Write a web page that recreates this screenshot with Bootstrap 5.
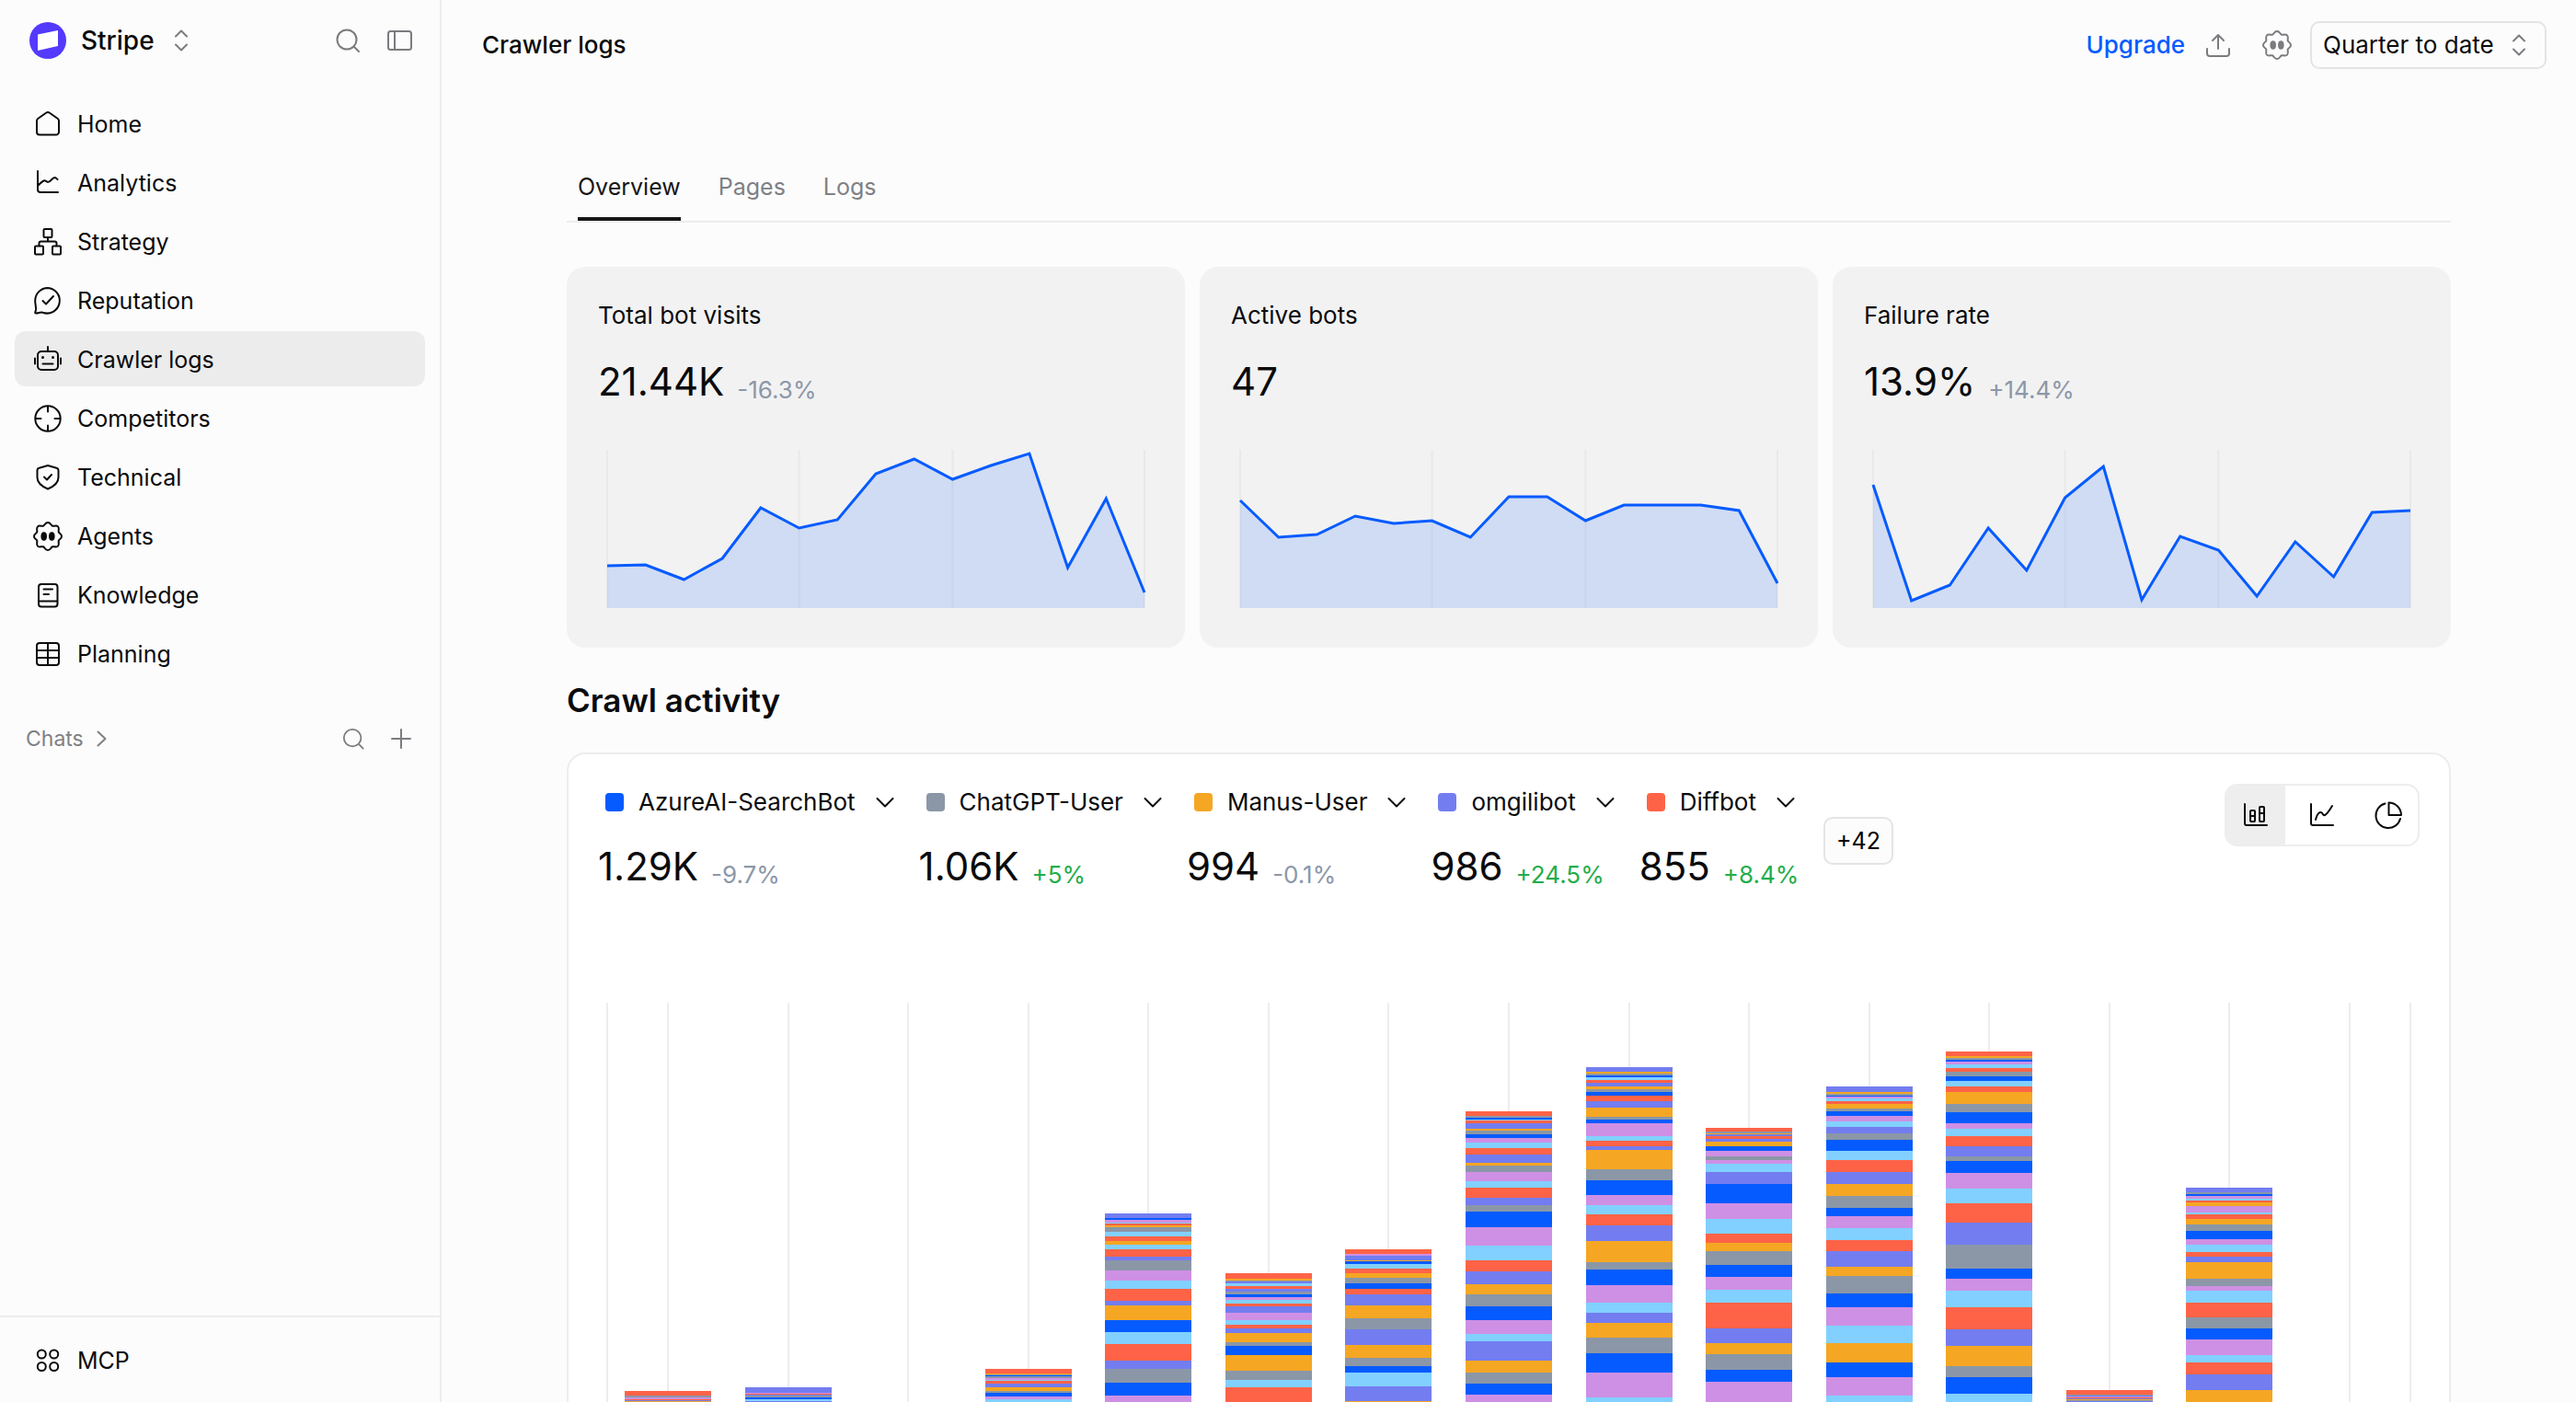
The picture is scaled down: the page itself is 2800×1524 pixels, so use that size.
<!DOCTYPE html>
<html lang="en">
<head>
<meta charset="utf-8">
<meta name="viewport" content="width=device-width, initial-scale=1">
<title>Crawler logs</title>
<link href="https://cdn.jsdelivr.net/npm/bootstrap@5.3.0/dist/css/bootstrap.min.css" rel="stylesheet">
<style>
  :root {
    --ink: #0b0b0c; --soft: #808084; --muted: #8c97a8; --line: #ededed;
    --blue: #055bff; --green: #1fad4b;
  }
  body { font-family: Inter, "Liberation Sans", sans-serif; font-size: 26px; line-height: 32px; color: var(--ink); background: #fcfcfc; }
  svg { display: block; flex: none; }
  .ico { width: 32px; height: 32px; fill: none; stroke: currentColor; stroke-width: 2; stroke-linecap: round; stroke-linejoin: round; }
  .bare { border: 0; background: none; padding: 0; color: inherit; }
  .gray { color: #7b7b80; }

  .side { width: 480px; border-right: 2px solid var(--line); }
  .side-head { padding: 24px 28px 0 32px; height: 88px; }
  .brand { font-size: 28px; font-weight: 500; gap: 16px; }
  .brand .ico { margin-left: -3px; }
  .side-nav { padding: 16px; gap: 4px; }
  .side-link { height: 60px; padding: 1px 20px 0; gap: 16px; border-radius: 12px; color: var(--ink); text-decoration: none; font-size: 25px; }
  .side-link.active { background: #ececec; }
  .side-link:hover { color: var(--ink); }
  .chats { padding: 31px 26px 0 28px; font-size: 23px; color: var(--soft); }
  .side-foot { border-top: 2px solid var(--line); padding: 16px; }

  .topbar { height: 96px; padding: 1px 32px 0 44px; }
  .topbar h1 { font-size: 26px; font-weight: 500; line-height: 32px; }
  .upgrade { color: var(--blue); font-weight: 500; text-decoration: none; }
  .period .form-select { height: 52px; border: 2px solid #e4e4e4; border-radius: 10px; padding: 0 55px 0 12px; font-size: 26px; font-weight: 400; line-height: 32px; color: var(--ink); background: #fcfcfc; }
  .period svg { position: absolute; right: 14px; top: 10px; pointer-events: none; }

  .page { padding: 0 136px; }
  .views { margin-top: 80px; padding: 0 12px; gap: 41px; border-bottom: 2px solid var(--line); font-size: 25px; }
  .views a { height: 64px; padding-top: 11px; color: var(--soft); text-decoration: none; border-bottom: 4px solid transparent; }
  .views a.active { color: #171717; border-color: #171717; }
  .stats { margin-top: 48px; gap: 16px; }
  .stat { flex: 1 1 0; min-width: 0; height: 414px; background: #f2f2f2; border-radius: 20px; padding: 37px 34px 0; }
  .stat svg { width: calc(100% - 20px); height: 172px; margin: 42px 10px 0; overflow: visible; }
  .figure-row { gap: 14px; line-height: 64px; }
  .stat .figure-row { margin-top: 24px; }
  .num { font-size: 42px; }
  .delta { line-height: 32px; color: var(--muted); margin-top: 25px; }
  .delta.up { color: var(--green); }
  .page h2 { font-size: 35px; line-height: 44px; font-weight: 600; margin: 35px 0 0; }

  .panel { margin-top: 35px; padding: 32px; background: #fff; border: 2px solid var(--line); border-radius: 20px; }
  .legend-row { gap: 21px; }
  .series { height: 124px; }
  .series .figure-row { margin-top: 18px; }
  .series-name { height: 40px; padding-left: 8px; gap: 16px; }
  .swatch { width: 20px; height: 20px; border-radius: 4px; }
  .more { height: 52px; border: 2px solid #e4e4e4; border-radius: 10px; background: #fcfcfc; padding: 0 12px; font-size: 25px; }
  .kinds { height: 68px; border: 2px solid var(--line); border-radius: 14px; overflow: hidden; }
  .kinds button { width: 64px; }
  .kinds button:nth-child(2) { width: 80px; }
  .kinds [aria-pressed=true] { background: #eee; }

  .plot { height: 434px; margin: 114px 9px 0; border-left: 2px solid var(--line); border-right: 2px solid var(--line); }
  .band { flex: 1 1 0; position: relative; }
  .band::before { content: ""; position: absolute; left: 50%; top: 0; bottom: 0; border-left: 2px solid var(--line); margin-left: -1px; }
  .pile { position: relative; width: 72%; }
</style>
<script src="https://cdn.jsdelivr.net/npm/bootstrap@5.3.0/dist/js/bootstrap.bundle.min.js"></script>
</head>
<body>
<svg width="0" height="0" class="position-absolute" aria-hidden="true">
  <defs>
    <symbol id="i-search" viewBox="0 0 32 32"><circle cx="15" cy="15" r="10.500"/><path d="M23 23l5 5"/></symbol>
    <symbol id="i-updown" viewBox="0 0 32 32"><path d="M10 11.500l6-6 6 6M10 20.500l6 6 6-6"/></symbol>
    <symbol id="i-down" viewBox="0 0 32 32"><path d="M7.500 12l8.500 8.500L24.500 12"/></symbol>
    <symbol id="i-agent" viewBox="0 0 32 32"><path d="M16 1c3.200 0 3 2.900 5 3.700s4-1.300 6 .7.100 4 .8 6S31 12.800 31 16s-2.500 2.600-3.200 4.600 1.200 4-.8 6-4-.1-6 .7-1.800 3.700-5 3.700-3-2.900-5-3.700-4 1.300-6-.7-.1-4-.8-6S1 19.200 1 16s2.500-2.600 3.200-4.600-1.200-4 .8-6 4 .1 6-.7S12.800 1 16 1z"/><g fill="currentColor" stroke="none"><ellipse cx="11.700" cy="16" rx="3.300" ry="4.800"/><ellipse cx="20.300" cy="16" rx="3.300" ry="4.800"/></g></symbol>
    <symbol id="i-axis" viewBox="0 0 32 32"><path d="M5 3v20a3 3 0 0 0 3 3h19M5 19c2-2 4.500-4.500 6.500-5.500 2.500-1 3.500 2.500 6 1s3.500-4 6-4.500c1.200 0 2 1 3 2"/></symbol>
  </defs>
</svg>

<div class="d-flex vh-100 overflow-hidden">
  <aside class="side d-flex flex-column flex-shrink-0">
    <div class="side-head d-flex align-items-start">
      <button class="brand bare d-flex align-items-center" type="button">
        <svg width="40" height="40" viewBox="0 0 40 40"><circle cx="20" cy="20" r="20" fill="#533afd"/><path d="M9 13.500L31 9v17L9 31z" fill="#fff"/></svg>
        Stripe
        <svg class="ico gray" aria-hidden="true"><use href="#i-updown"/></svg>
      </button>
      <div class="d-flex gray ms-auto mt-1">
        <button class="bare" type="button" aria-label="Search"><svg class="ico me-4"><use href="#i-search"/></svg></button>
        <button class="bare" type="button" aria-label="Toggle sidebar"><svg class="ico" viewBox="0 0 32 32"><rect x="4" y="6" width="25" height="20" rx="2.500"/><path d="M11 6v20"/></svg></button>
      </div>
    </div>
    <nav class="side-nav d-flex flex-column">
      <a class="side-link d-flex align-items-center" href="#"><svg class="ico" viewBox="0 0 32 32"><path d="M4 12.500c0-1.300.5-2.100 1.500-2.800l8.500-6a3.500 3.500 0 0 1 4 0l8.500 6c1 .7 1.500 1.500 1.500 2.800V24.500a3 3 0 0 1-3 3H7a3 3 0 0 1-3-3z"/></svg>Home</a>
      <a class="side-link d-flex align-items-center" href="#"><svg class="ico"><use href="#i-axis"/></svg>Analytics</a>
      <a class="side-link d-flex align-items-center" href="#"><svg class="ico" viewBox="0 0 32 32"><rect x="11.500" y="2" width="9" height="9" rx="1"/><rect x="2" y="20.500" width="9" height="9" rx="1"/><rect x="21" y="20.500" width="9" height="9" rx="1"/><path d="M16 11v4.500M6.500 20v-2.500a2 2 0 0 1 2-2h15a2 2 0 0 1 2 2V20"/></svg>Strategy</a>
      <a class="side-link d-flex align-items-center" href="#"><svg class="ico" viewBox="0 0 32 32"><path d="M16 2a13.800 13.800 0 1 1-5.500 26.800c-2.500-1-5 1-7.500.7-1.500-.3-.5-1.800 0-3.500.5-2-.8-6.500-.8-10A13.800 13.800 0 0 1 16 2z"/><path d="M10.500 16l3.500 3.500 8-8.500"/></svg>Reputation</a>
      <a class="side-link active d-flex align-items-center" href="#" aria-current="page"><svg class="ico" viewBox="0 0 32 32"><rect x="5" y="7" width="22" height="20" rx="4"/><path d="M16 2v5M2 14.500v6M30 14.500v6M10.500 20.500h11"/><g fill="currentColor" stroke="none"><circle cx="10.500" cy="13.500" r="1.500"/><circle cx="21.500" cy="13.500" r="1.500"/></g></svg>Crawler logs</a>
      <a class="side-link d-flex align-items-center" href="#"><svg class="ico" viewBox="0 0 32 32"><circle cx="16" cy="16" r="13.700"/><path d="M16 3v5.500M16 23.500V29M3 16h5.500M23.500 16H29"/></svg>Competitors</a>
      <a class="side-link d-flex align-items-center" href="#"><svg class="ico" viewBox="0 0 32 32"><path d="M16 3l9.500 2.800A2.500 2.500 0 0 1 27.500 8v8c0 6-5.500 10-11.500 12.500C10 26 4.500 22 4.500 16V8a2.500 2.500 0 0 1 2-2.200z"/><path d="M12 15.500l3 3 5-5.500"/></svg>Technical</a>
      <a class="side-link d-flex align-items-center" href="#"><svg class="ico"><use href="#i-agent"/></svg>Agents</a>
      <a class="side-link d-flex align-items-center" href="#"><svg class="ico" viewBox="0 0 32 32"><rect x="6" y="4" width="20.500" height="24.500" rx="3"/><path d="M6 22.500h20M11.500 9.500h9.500M11.500 15h5.500"/></svg>Knowledge</a>
      <a class="side-link d-flex align-items-center" href="#"><svg class="ico" viewBox="0 0 32 32"><rect x="4" y="4" width="24" height="24" rx="3"/><path d="M16 4v24M4 12h24M4 20h24"/></svg>Planning</a>
    </nav>
    <div class="chats d-flex align-items-center">
      <button class="bare d-flex align-items-center gap-1" type="button">Chats <svg class="ico"><path d="M11.500 8.500l8 7.500-8 7.500"/></svg></button>
      <div class="d-flex gap-3 gray ms-auto">
        <button class="bare me-1" type="button" aria-label="Search chats"><svg class="ico" viewBox="-2 -2 36 36"><use href="#i-search" width="32" height="32"/></svg></button>
        <button class="bare" type="button" aria-label="New chat"><svg class="ico"><path d="M16 6v20M6 16h20"/></svg></button>
      </div>
    </div>
    <div class="side-foot mt-auto">
      <a class="side-link d-flex align-items-center" href="#"><svg class="ico" viewBox="0 0 32 32"><circle cx="9.300" cy="9" r="4.500"/><circle cx="22.700" cy="9" r="4.500"/><circle cx="9.300" cy="22.500" r="4.500"/><circle cx="22.700" cy="22.500" r="4.500"/></svg>MCP</a>
    </div>
  </aside>

  <main class="flex-grow-1 overflow-hidden">
    <header class="topbar d-flex align-items-center">
      <h1 class="m-0">Crawler logs</h1>
      <div class="ms-auto d-flex align-items-center gray">
        <a class="upgrade" href="#">Upgrade</a>
        <button class="bare mx-3 ps-1" type="button" aria-label="Share"><svg class="ico"><path d="M16 20V5M10 11l6-6 6 6M4 20v5a3 3 0 0 0 3 3h18a3 3 0 0 0 3-3v-5"/></svg></button>
        <button class="bare mx-3" type="button" aria-label="Agents"><svg class="ico"><use href="#i-agent"/></svg></button>
        <div class="period position-relative ms-1">
          <select class="form-select" aria-label="Period"><option>Quarter to date</option></select>
          <svg class="ico"><use href="#i-updown"/></svg>
        </div>
      </div>
    </header>

    <div class="page">
      <nav class="views d-flex">
        <a class="active" href="#" aria-current="page">Overview</a>
        <a href="#">Pages</a>
        <a href="#">Logs</a>
      </nav>

      <section class="stats d-flex">
        <div class="stat">
          <div>Total bot visits</div>
          <div class="figure-row d-flex"><span class="num">21.44K</span><span class="delta">-16.3%</span></div>
          <svg data-line="126 125 141 118 63 85 76 26 10 32 17 4 128 53 155"></svg>
        </div>
        <div class="stat">
          <div>Active bots</div>
          <div class="figure-row d-flex"><span class="num">47</span></div>
          <svg data-line="55 95 92 72 80 77 95 51 51 77 60 60 60 66 145"></svg>
        </div>
        <div class="stat">
          <div>Failure rate</div>
          <div class="figure-row d-flex"><span class="num">13.9%</span><span class="delta">+14.4%</span></div>
          <svg data-line="38 164 147 85 131 52 18 163 94 109 159 100 138 68 66"></svg>
        </div>
      </section>

      <h2>Crawl activity</h2>

      <section class="panel">
        <div class="d-flex align-items-start">
          <div class="legend-row d-flex align-items-center">
            <div class="series"><button class="series-name bare d-flex align-items-center" type="button"><span class="swatch" style="background:#055bff"></span>AzureAI-SearchBot<svg class="ico"><use href="#i-down"/></svg></button>
              <div class="figure-row d-flex"><span class="num">1.29K</span><span class="delta">-9.7%</span></div></div>
            <div class="series"><button class="series-name bare d-flex align-items-center" type="button"><span class="swatch" style="background:#8b97a7"></span>ChatGPT-User<svg class="ico"><use href="#i-down"/></svg></button>
              <div class="figure-row d-flex"><span class="num">1.06K</span><span class="delta up">+5%</span></div></div>
            <div class="series"><button class="series-name bare d-flex align-items-center" type="button"><span class="swatch" style="background:#f5a623"></span>Manus-User<svg class="ico"><use href="#i-down"/></svg></button>
              <div class="figure-row d-flex"><span class="num">994</span><span class="delta">-0.1%</span></div></div>
            <div class="series"><button class="series-name bare d-flex align-items-center" type="button"><span class="swatch" style="background:#737df0"></span>omgilibot<svg class="ico"><use href="#i-down"/></svg></button>
              <div class="figure-row d-flex"><span class="num">986</span><span class="delta up">+24.5%</span></div></div>
            <div class="series"><button class="series-name bare d-flex align-items-center" type="button"><span class="swatch" style="background:#ff6347"></span>Diffbot<svg class="ico"><use href="#i-down"/></svg></button>
              <div class="figure-row d-flex"><span class="num">855</span><span class="delta up">+8.4%</span></div></div>
            <button class="more ms-1" type="button">+42</button>
          </div>
          <div class="kinds d-flex ms-auto" role="group" aria-label="Chart type">
            <button class="bare d-flex align-items-center justify-content-center" type="button" aria-label="Stacked bars" aria-pressed="true"><svg class="ico"><path d="M4 4v21a2 2 0 0 0 2 2h22"/><rect x="10" y="11" width="5" height="12" rx="1"/><path d="M10 17h5"/><rect x="20" y="7" width="5" height="16" rx="1"/><path d="M20 14h5"/></svg></button>
            <button class="bare d-flex align-items-center justify-content-center" type="button" aria-label="Lines"><svg class="ico"><path d="M4 4v21a2 2 0 0 0 2 2h22M9 21c1-4 3-8 5.500-8s2 4 4.500 3 5-5 8-10"/></svg></button>
            <button class="bare d-flex align-items-center justify-content-center" type="button" aria-label="Pie"><svg class="ico"><path d="M12.500 3.500A13.500 13.500 0 1 0 29 20"/><path d="M16.500 2.500A13.500 13.500 0 0 1 30 16H16.500z"/></svg></button>
          </div>
        </div>
        <div class="plot d-flex" id="plot"></div>
      </section>
    </div>
  </main>
</div>

<script>
  // Area charts: 15 samples over a 584 x 172 plot.
  document.querySelectorAll('[data-line]').forEach(svg => {
    const ys = svg.dataset.line.split(' ').map(Number);
    const x = i => i * 584 / 14;
    const pts = ys.map((y, i) => x(i) + ',' + y).join(' ');
    const grid = [0, 5, 9, 14].map(i => `<path d="M${x(i)} 0V172" stroke="#e9e9e9" stroke-width="2"/>`).join('');
    svg.setAttribute('viewBox', '0 0 584 172');
    svg.setAttribute('preserveAspectRatio', 'none');
    svg.innerHTML = grid +
      `<polygon points="0,172 ${pts} 584,172" fill="#055bff" fill-opacity=".14"/>` +
      `<polyline points="${pts}" fill="none" stroke="#055bff" stroke-width="3"/>`;
  });

  // Stacked bars: colour letter and height of each slice, from the top down.
  const colours = { B: '#055bff', G: '#8b97a7', O: '#f5a623', V: '#737df0', R: '#ff6347', L: '#82d0ff', P: '#ce90e4' };
  const bars = [
    'R5 G2 P2 R1 V1 O1',
    'V6 P1 R1 V1 G2 B2 L2 V1',
    '',
    'R5 O1 G1 B1 G2 P2 L1 R3 V4 O4 G2 B4 P3 L3',
    'V5 B2 P3 L1 R2 O2 G5 L5 R5 O4 L5 R8 V4 G11 P11 L9 R13 V5 O16 B13 L13 R18 V9 G15 B14 P7',
    'R6 O2 G1 V2 L3 R3 V3 G3 B3 P3 L4 R3 V7 P8 L5 R4 V5 O10 G4 B10 O17 G10 L8 R16',
    'R5 P2 V5 O1 B3 L5 R5 O5 G6 B6 R6 V12 O14 G12 V17 O14 G9 B7 L15 V16 O1',
    'R5 G2 B2 L1 R3 V6 O2 G4 B4 P5 L6 R7 V9 O3 G7 P10 L7 R11 V8 G7 B17 P20 L16 R12 V14 O11 G13 B15 P15 L8 V21 O13 G12 B12 P8',
    'V5 O2 G2 B2 L3 R3 V4 O3 G3 B4 R6 V7 O10 G3 B4 P14 L5 R6 V4 O21 G12 B16 P11 L10 R12 V17 O23 G8 B17 P19 L11 V11 O16 G17 B21 P27 L5',
    'R4 G2 O1 V2 R3 V3 O5 B5 P6 G4 P4 L9 V13 B21 P17 L16 R10 O9 G15 B13 P14 L14 R28 V16 O12 G17 B13 P22',
    'V6 O2 G2 B1 P2 L3 R3 O5 G3 B5 P6 L6 V7 G7 B12 L10 R13 V13 O13 G13 B9 P13 L13 R12 V17 O10 G19 B15 P20 L19 O21 B16 P20 L7',
    'R5 O2 G2 B2 P3 L4 R4 G5 B5 L6 R6 O13 G9 B12 P6 L8 R11 V11 G5 B13 P17 L16 R21 V24 G26 B11 P13 L18 R24 V18 O22 G12 B18 L9',
    'R5 G1 V1 P1 R1 V1 O1 G1 V1',
    'V5 G2 B2 P3 L2 R2 O4 P7 L2 R5 O6 G7 B9 P6 L8 R5 V6 O18 G8 P5 L13 R16 G12 B12 P17 L8 R13 V17 O13',
    ''
  ];
  document.getElementById('plot').innerHTML = bars.map(bar =>
    '<div class="band d-flex align-items-end justify-content-center"><div class="pile">' +
    bar.split(' ').filter(Boolean).map(s => `<div style="height:${s.slice(1)}px;background:${colours[s[0]]}"></div>`).join('') +
    '</div></div>').join('');
</script>
</body>
</html>
